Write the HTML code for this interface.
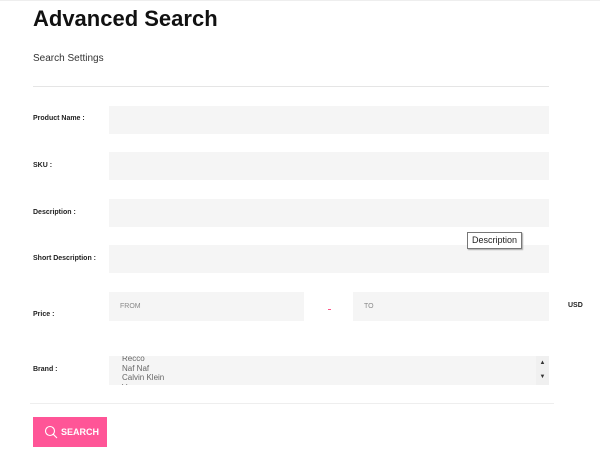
<!DOCTYPE html>
<html><head><style>
body{margin:0;width:600px;height:461px;background:#fff;font-family:"Liberation Sans",sans-serif;position:relative;overflow:hidden}
.a{position:absolute}
h1{position:absolute;left:33px;top:6px;margin:0;font-size:22px;font-weight:bold;color:#111;letter-spacing:0}
.lbl{position:absolute;left:33px;font-size:7px;font-weight:bold;color:#222}
.in{position:absolute;background:#f5f5f5}
.ph{font-size:7px;color:#888;position:absolute}
</style></head><body>
<div class="a" style="left:0;top:0;width:600px;height:1px;background:#eee"></div>
<h1>Advanced Search</h1>
<div class="a" style="left:33px;top:53px;font-size:10px;color:#333">Search Settings</div>
<div class="a" style="left:33px;top:86px;width:516px;height:1px;background:#e5e5e5"></div>

<div class="lbl" style="top:115px">Product Name :</div>
<div class="in" style="left:109px;top:106px;width:440px;height:28px"></div>
<div class="lbl" style="top:162px">SKU :</div>
<div class="in" style="left:109px;top:152px;width:440px;height:28px"></div>
<div class="lbl" style="top:209px">Description :</div>
<div class="in" style="left:109px;top:199px;width:440px;height:28px"></div>
<div class="lbl" style="top:255px">Short Description :</div>
<div class="in" style="left:109px;top:245px;width:440px;height:28px"></div>
<div class="a" style="left:467px;top:232px;width:53px;height:15px;border:1px solid #777;background:#fff;box-shadow:1px 1px 1px #aaa;font-size:9px;color:#222;line-height:15px;text-align:center">Description</div>

<div class="lbl" style="top:311px">Price :</div>
<div class="in" style="left:109px;top:292px;width:195px;height:29px"><span class="ph" style="left:11px;top:11px">FROM</span></div>
<div class="a" style="left:328px;top:309px;width:3px;height:1px;background:#f58"></div>
<div class="in" style="left:353px;top:292px;width:196px;height:29px"><span class="ph" style="left:11px;top:11px">TO</span></div>
<div class="a" style="left:568px;top:302px;font-size:7px;font-weight:bold;color:#222">USD</div>

<div class="lbl" style="top:366px">Brand :</div>
<div class="in" style="left:109px;top:356px;width:440px;height:29px;overflow:hidden">
<div style="position:absolute;left:13px;top:-2px;font-size:8px;color:#666;line-height:9.5px">Recco<br>Naf Naf<br>Calvin Klein<br>Vero</div>
<div style="position:absolute;right:0;top:0;width:13px;height:29px;background:#f0f0f0;font-size:6px;color:#333;text-align:center;line-height:14px">▲<br>▼</div>
</div>

<div class="a" style="left:30px;top:403px;width:524px;height:1px;background:#eee"></div>
<div class="a" style="left:33px;top:417px;width:74px;height:30px;background:#ff5597">
<svg class="a" style="left:11px;top:8px" width="14" height="14" viewBox="0 0 14 14"><circle cx="6" cy="6" r="4.5" fill="none" stroke="#fff" stroke-width="1.1"/><line x1="9.3" y1="9.3" x2="13" y2="13" stroke="#fff" stroke-width="1.1"/></svg>
<span class="a" style="left:28px;top:10px;font-size:9px;font-weight:bold;color:#fff">SEARCH</span>
</div>
</body></html>
